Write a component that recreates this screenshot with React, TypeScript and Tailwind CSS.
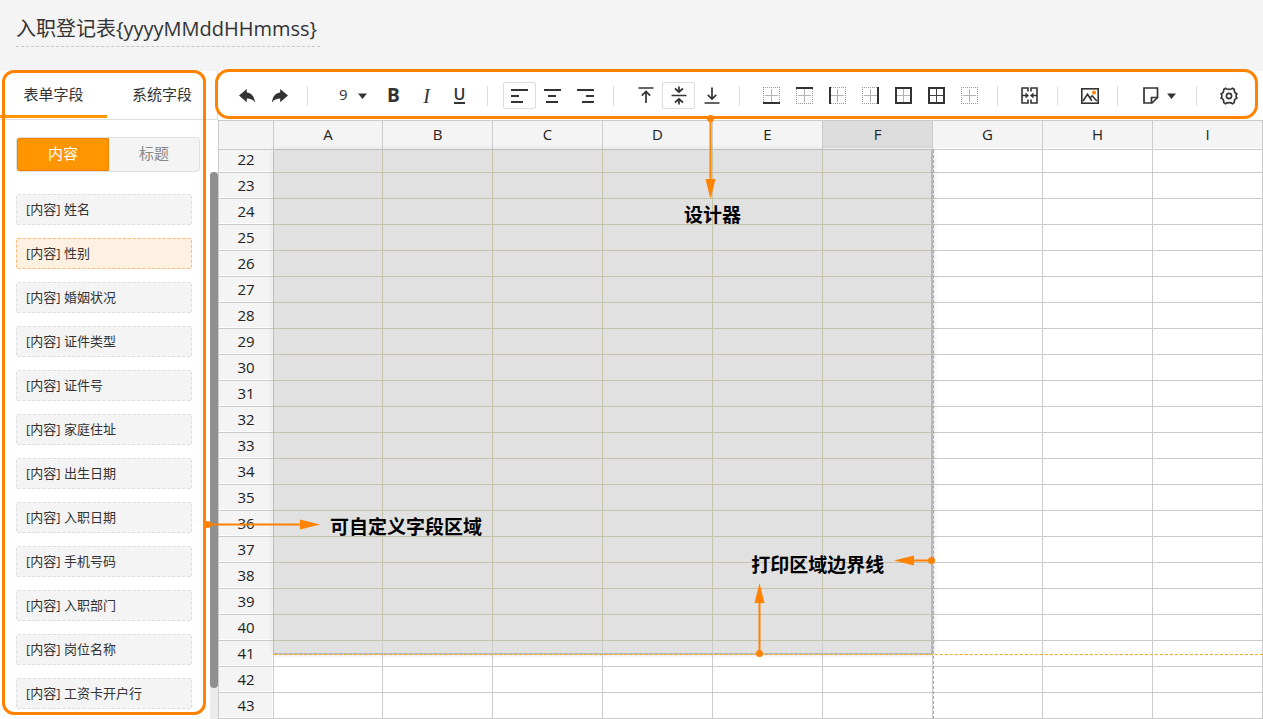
import { useState } from 'react';
import type { ReactNode } from 'react';
import clsx from 'clsx';

const FIELDS = [
  '姓名',
  '性别',
  '婚姻状况',
  '证件类型',
  '证件号',
  '家庭住址',
  '出生日期',
  '入职日期',
  '手机号码',
  '入职部门',
  '岗位名称',
  '工资卡开户行',
];

const COLUMNS = ['A', 'B', 'C', 'D', 'E', 'F', 'G', 'H', 'I'];
const FIRST_ROW = 22;
const LAST_ROW = 43;
const PRINT_COLUMNS = 6;
const PRINT_LAST_ROW = 41;

const ROWS = Array.from({ length: LAST_ROW - FIRST_ROW + 1 }, (_, i) => FIRST_ROW + i);

type Direction = 'right' | 'left' | 'up' | 'down';

// Dot at the start, arrow head at the end
function Arrow({ dir, length, className }: { dir: Direction; length: number; className: string }) {
  const horizontal = dir === 'right' || dir === 'left';
  const transform = {
    right: 'translate(0 0)',
    left: `matrix(-1 0 0 1 ${length} 0)`,
    down: 'matrix(0 1 1 0 0 0)',
    up: `matrix(0 -1 1 0 0 ${length})`,
  }[dir];

  return (
    <svg
      width={horizontal ? length : 11}
      height={horizontal ? 11 : length}
      className={clsx('absolute z-20', className)}
      fill="#ff8200"
      aria-hidden="true"
    >
      <g transform={transform}>
        <circle cx="3.5" cy="5.5" r="3.5" />
        <rect x="3" y="4.5" width={length - 20} height="2" />
        <path d={`M${length - 20} 0.5 L${length} 5.5 L${length - 20} 10.5 Z`} />
      </g>
    </svg>
  );
}

function Caret() {
  return (
    <svg width="9" height="6" viewBox="0 0 9 6" fill="#333" aria-hidden="true">
      <path d="M0 0.5h9L4.5 6z" />
    </svg>
  );
}

function Separator() {
  return <div className="ml-[11px] mr-[15px] h-5 w-px shrink-0 bg-[#dcdcdc]" />;
}

function ToolButton({ label, active, children }: { label: string; active?: boolean; children: ReactNode }) {
  return (
    <button
      type="button"
      aria-label={label}
      title={label}
      className={clsx(
        'flex h-[27px] w-[33px] shrink-0 items-center justify-center rounded-xs border text-[#333]',
        active ? 'border-[#dcdcdc]' : 'border-transparent hover:bg-gray-100'
      )}
    >
      {children}
    </button>
  );
}

function ReplyIcon({ flip }: { flip?: boolean }) {
  return (
    <svg width="16" height="14" viewBox="0 0 16 14" fill="#333">
      <path
        transform={flip ? 'matrix(-1 0 0 1 16 0)' : undefined}
        d="M0 6.600 7.800 0v3.400c4.800.5 7.600 4 8.200 10-2-2.700-4.600-3.800-8.200-3.800v3.600z"
      />
    </svg>
  );
}

function AlignIcon({ align }: { align: 'left' | 'center' | 'right' }) {
  const mid = { left: 0, center: 4, right: 9 }[align];
  const end = { left: 0, center: 2, right: 5 }[align];
  return (
    <svg width="17" height="14" viewBox="0 0 17 14" fill="#333">
      <rect x="0" y="0" width="17" height="2" />
      <rect x={mid} y="6" width="8" height="2" />
      <rect x={end} y="12" width="12" height="2" />
    </svg>
  );
}

function VerticalIcon({ kind }: { kind: 'top' | 'middle' | 'bottom' }) {
  const d = {
    top: 'M0.500 2h15M8 17V5.500M3.800 9.700 8 5.500l4.200 4.200',
    middle: 'M0.500 9.500h15M8 .5v5M4 2.500l4 3.500 4-3.500M8 18.500v-5M4 16.500 8 13l4 3.500',
    bottom: 'M0.500 17h15M8 1.500v11.500M3.800 8.800 8 13l4.200-4.200',
  }[kind];
  return (
    <svg width="16" height="19" viewBox="0 0 16 19" fill="none" stroke="#333" strokeWidth="1.7">
      <path d={d} />
    </svg>
  );
}

const BORDER_KINDS = [
  { label: '下框线', d: 'M0 16h17' },
  { label: '上框线', d: 'M0 1h17' },
  { label: '左框线', d: 'M1 0v17' },
  { label: '右框线', d: 'M16 0v17' },
  { label: '外框线', d: 'M1 1h15v15H1z' },
  { label: '所有框线', d: 'M1 1h15v15H1z', inner: true },
  { label: '无框线', d: '' },
];

function BorderIcon({ d, inner }: { d: string; inner?: boolean }) {
  return (
    <svg width="17" height="17" viewBox="0 0 17 17" fill="none" shapeRendering="crispEdges">
      <path d="M0 0.500h17M0 16.500h17M0.500 0v17M16.500 0v17" stroke="#999" strokeDasharray="1 1" />
      <path d="M2 8.500h13M8.500 2v13" stroke={inner ? '#444' : '#b4b4b4'} />
      {d && <path d={d} stroke="#333" strokeWidth="2" />}
    </svg>
  );
}

function MergeIcon() {
  return (
    <svg width="17" height="17" viewBox="0 0 17 17" fill="none" stroke="#333" strokeWidth="1.600">
      <path d="M7 4.500V1H1v15h6v-3.500M10 4.500V1h6v15h-6v-3.500M1 8.500h4M16 8.500h-4" />
      <path d="M4.500 5.500 8 8.500l-3.500 3zM12.500 5.500 9 8.500l3.500 3z" fill="#333" stroke="none" />
    </svg>
  );
}

function ImageIcon() {
  return (
    <svg width="18" height="16" viewBox="0 0 18 16" fill="none" stroke="#333" strokeWidth="1.600">
      <rect x="0.800" y="0.800" width="16.400" height="14.400" />
      <path d="M2 13 6.500 6.200l4.300 6.600M8.800 10.200l2.400-2.400 4.600 5.200" />
      <circle cx="13" cy="4.500" r="2" fill="#ff8200" stroke="none" />
    </svg>
  );
}

function NoteIcon() {
  return (
    <svg width="16" height="17" viewBox="0 0 16 17" fill="none" stroke="#333" strokeWidth="1.700">
      <path d="M1 1h13.500v9.500L9 16H1z" />
      <path d="M8.500 16v-5.500h6" />
    </svg>
  );
}

function SettingsIcon() {
  return (
    <svg width="18" height="18" viewBox="0 0 18 18" fill="none" stroke="#333" strokeWidth="1.600" strokeLinejoin="round">
      <path d="M5.600 1.200C7 2.800 11 2.800 12.400 1.200L14.300 2.500C14 4.800 15 6.200 17 6.900C15.800 8.200 15.800 9.800 17 11.100C15 11.800 14 13.200 14.300 15.500L12.400 16.800C11 15.200 7 15.200 5.600 16.800L3.700 15.500C4 13.200 3 11.800 1 11.100C2.200 9.800 2.200 8.200 1 6.900C3 6.200 4 4.800 3.700 2.500Z" />
      <circle cx="9" cy="9" r="2.600" />
    </svg>
  );
}

function Toolbar() {
  return (
    <div className="flex h-[49px] items-center pl-3" role="toolbar" aria-label="设计器">
      <ToolButton label="撤销"><ReplyIcon /></ToolButton>
      <ToolButton label="恢复"><ReplyIcon flip /></ToolButton>
      <Separator />
      <div className="relative flex w-[54px] shrink-0 items-center">
        <select
          aria-label="字号"
          defaultValue="9"
          className="w-full appearance-none bg-transparent pb-0.5 pl-4 text-[15px] text-[#333] outline-none"
        >
          <option>9</option>
          <option>10</option>
          <option>12</option>
        </select>
        <span className="pointer-events-none absolute right-2.5">
          <Caret />
        </span>
      </div>
      <ToolButton label="加粗"><span className="text-[19px] font-bold">B</span></ToolButton>
      <ToolButton label="斜体">
        <span className="font-['Liberation_Serif',serif] text-xl font-medium italic">I</span>
      </ToolButton>
      <ToolButton label="下划线">
        <span className="border-b-2 border-[#333] text-base leading-[15px] font-semibold">U</span>
      </ToolButton>
      <Separator />
      <ToolButton label="左对齐" active><AlignIcon align="left" /></ToolButton>
      <ToolButton label="居中"><AlignIcon align="center" /></ToolButton>
      <ToolButton label="右对齐"><AlignIcon align="right" /></ToolButton>
      <Separator />
      <ToolButton label="顶端对齐"><VerticalIcon kind="top" /></ToolButton>
      <ToolButton label="垂直居中" active><VerticalIcon kind="middle" /></ToolButton>
      <ToolButton label="底端对齐"><VerticalIcon kind="bottom" /></ToolButton>
      <Separator />
      {BORDER_KINDS.map((kind) => (
        <ToolButton key={kind.label} label={kind.label}>
          <BorderIcon d={kind.d} inner={kind.inner} />
        </ToolButton>
      ))}
      <Separator />
      <ToolButton label="合并单元格"><MergeIcon /></ToolButton>
      <Separator />
      <ToolButton label="图片"><ImageIcon /></ToolButton>
      <Separator />
      <button type="button" aria-label="纸张" className="flex w-[52px] shrink-0 items-center gap-2 pl-2.5">
        <NoteIcon />
        <Caret />
      </button>
      <Separator />
      <ToolButton label="设置"><SettingsIcon /></ToolButton>
    </div>
  );
}

function Sidebar() {
  const [tab, setTab] = useState('表单字段');
  const [part, setPart] = useState('内容');
  const [selected, setSelected] = useState('性别');

  return (
    <aside className="relative flex w-[218px] shrink-0 flex-col bg-white">
      <div className="flex h-[49px] shrink-0 border-r border-b border-[#dedede]">
        {['表单字段', '系统字段'].map((name) => (
          <button
            key={name}
            type="button"
            onClick={() => setTab(name)}
            className={clsx(
              'border-b-3 pt-0.5 text-[15px] text-[#333]',
              name === '表单字段' ? 'w-[107px]' : 'flex-1',
              tab === name ? 'mb-px border-[#ff9500]' : 'border-transparent'
            )}
          >
            {name}
          </button>
        ))}
      </div>

      <div className="mx-4 mt-[17px] flex h-[35px] w-[184px] shrink-0 rounded border border-[#e0e0e0] bg-[#f4f4f4]">
        {['内容', '标题'].map((name) => (
          <button
            key={name}
            type="button"
            onClick={() => setPart(name)}
            className={clsx(
              'flex-1 pb-0.5 text-[15px]',
              part === name ? 'rounded-l-xs border border-[#f08000] bg-[#ff9500] text-white' : 'text-[#888]'
            )}
          >
            {name}
          </button>
        ))}
      </div>

      <div className="flex min-h-0 flex-1 justify-between">
        <ul className="mt-[22px] ml-4 flex w-44 flex-col gap-[13px] overflow-hidden">
          {FIELDS.map((field) => (
            <li key={field}>
              <button
                type="button"
                onClick={() => setSelected(field)}
                className={clsx(
                  'h-[31px] w-full cursor-move rounded-xs border border-dashed px-[9px] text-left text-[13px] text-[#333]',
                  selected === field ? 'border-[#ffb978] bg-[#fff1e2]' : 'border-[#dedede] bg-[#f4f4f4]'
                )}
              >
                [内容] {field}
              </button>
            </li>
          ))}
        </ul>
        <div className="w-2 bg-[#ebebeb] pb-[31px]">
          <div className="h-full rounded-full bg-[#8f8f8f]" />
        </div>
      </div>

      <div className="pointer-events-none absolute -top-px bottom-1 left-0.5 w-[204px] rounded-xl border-3 border-[#ff8200]" />
    </aside>
  );
}

function Sheet() {
  return (
    <div className="relative">
      <table className="w-full table-fixed border-separate border-spacing-0 text-[15px] text-[#222]">
        <thead>
          <tr className="h-[30px]">
            <th className="w-14 border border-[#cbcbcb] bg-[#f4f4f4] p-0" />
            {COLUMNS.map((col) => (
              <th
                key={col}
                scope="col"
                className={clsx(
                  'border-y border-r border-[#cbcbcb] p-0 pb-0.5 text-[15px] leading-5 font-normal shadow-[inset_0_-1px_#fff]',
                  col === 'A' && 'w-[109px]',
                  col === 'F' ? 'bg-[#dcdcdc]' : 'bg-[#f4f4f4]'
                )}
              >
                {col}
              </th>
            ))}
          </tr>
        </thead>
        <tbody>
          {ROWS.map((row) => (
            <tr key={row} className={row === FIRST_ROW ? 'h-[23px]' : 'h-[26px]'}>
              <th
                scope="row"
                className={clsx(
                  'border-x border-b border-[#cbcbcb] bg-[#f4f4f4] p-0 font-normal shadow-[inset_-1px_-1px_#fff]',
                  row === FIRST_ROW ? 'pb-1 leading-[18px]' : 'pb-0.5 leading-5'
                )}
              >
                {row}
              </th>
              {COLUMNS.map((col, i) => {
                const printable = i < PRINT_COLUMNS && row <= PRINT_LAST_ROW;
                return (
                  <td
                    key={col}
                    className={clsx(
                      'border-r border-b p-0',
                      !printable && 'border-[#cbcbcb] bg-white',
                      printable && row < PRINT_LAST_ROW && 'border-[#c4c4ac] bg-[#e1e1e1]',
                      // the page break falls inside this row
                      printable &&
                        row === PRINT_LAST_ROW &&
                        'border-[#cbcbcb] bg-[linear-gradient(#e1e1e1_14px,#fff_14px)]'
                    )}
                  />
                );
              })}
            </tr>
          ))}
        </tbody>
      </table>

      {/* print area and its page break lines */}
      <div className="pointer-events-none absolute top-[30px] left-14 h-[504px] w-[calc((100%-56px)*2/3)] border-r-2 border-b border-[#b8b8b8] shadow-[0_0_5px_rgba(0,0,0,0.2)]">
        <Arrow dir="left" length={41} className="top-[405px] -right-1" />
        <p className="absolute top-[401px] right-[47px] text-[19px] leading-7 font-bold text-black">打印区域边界线</p>
        <Arrow dir="up" length={74} className="right-[166px] -bottom-1" />
      </div>
      <div className="pointer-events-none absolute top-[30px] bottom-0 left-[calc(56px+(100%-56px)*2/3)] border-l border-dashed border-[#e8a030]" />
      <div className="pointer-events-none absolute top-[534px] right-0 left-14 border-t border-dashed border-[#f5a623]" />
    </div>
  );
}

export default function App() {
  return (
    <div className="flex h-screen flex-col overflow-hidden bg-white font-['Open_Sans','Noto_Sans_CJK_SC',sans-serif] text-[#333]">
      <header className="h-[71px] shrink-0 bg-[#f4f4f4] px-4 pt-3">
        <input
          aria-label="模板名称"
          defaultValue="入职登记表{yyyyMMddHHmmss}"
          className="h-[35px] w-[304px] border-b border-dashed border-[#c8c8c8] bg-transparent pb-1 text-xl outline-none"
        />
      </header>

      <div className="flex min-h-0 flex-1">
        <Sidebar />
        <main className="relative min-w-0 flex-1">
          <Toolbar />
          <Sheet />

          <div className="pointer-events-none absolute -top-0.5 right-[5px] -left-[3px] h-[50px] rounded-[14px] border-3 border-[#ff8200]" />
          <Arrow dir="down" length={84} className="top-11 left-[487px]" />
          <p className="absolute top-[130px] left-[466px] text-[19px] leading-7 font-bold text-black">设计器</p>
          <Arrow dir="right" length={116} className="top-[448px] -left-[14px]" />
          <p className="absolute top-[442px] left-28 text-[19px] leading-7 font-bold text-black">可自定义字段区域</p>
        </main>
      </div>
    </div>
  );
}
